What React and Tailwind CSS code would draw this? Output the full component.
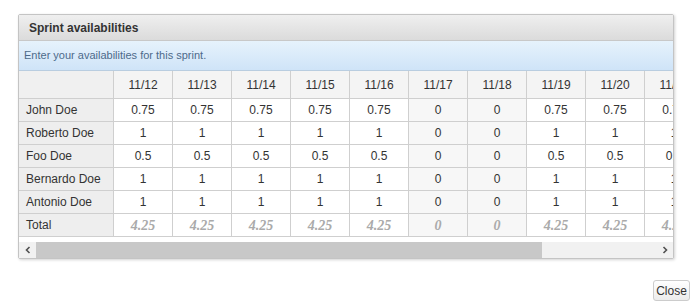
import React from "react";

const dates = ["11/12","11/13","11/14","11/15","11/16","11/17","11/18","11/19","11/20","11/21"];
const weekend = new Set(["11/17","11/18"]);
const rows = [
  ["John Doe", "0.75"],
  ["Roberto Doe", "1"],
  ["Foo Doe", "0.5"],
  ["Bernardo Doe", "1"],
  ["Antonio Doe", "1"],
];

function Cell({ d, children, extra = "" }) {
  const bg = weekend.has(d) ? "bg-[#f7f7f7]" : "bg-white";
  return (
    <div className={`w-[59px] shrink-0 border-r border-[#cfcfcf] flex items-center justify-center ${bg} ${extra}`}>
      {children}
    </div>
  );
}

export default function App() {
  return (
    <div className="w-[693px] h-[303px] bg-white relative text-[12px] text-[#333]" style={{ fontFamily: '"Liberation Sans", Arial, sans-serif' }}>
      <div className="absolute left-[18px] top-[14px] w-[656px] border border-[#c4c4c4] rounded-[2px] shadow-[1px_1px_3px_rgba(0,0,0,0.18)] bg-white overflow-hidden">
        <div className="h-[26px] bg-gradient-to-b from-[#efefef] to-[#dbdbdb] border-b border-[#c8c8c8] flex items-center pl-[10px] font-bold text-[12px] text-[#333]">
          Sprint availabilities
        </div>
        <div className="h-[30px] bg-gradient-to-b from-[#e6f2fc] to-[#cfe4f8] border-b border-[#b9cde0] flex items-center pl-[5px] text-[11px] text-[#4d6a8a]">
          Enter your availabilities for this sprint.
        </div>
        <div className="overflow-hidden">
          <div className="flex flex-col w-max">
            <div className="flex h-[28px] border-b border-[#cfcfcf] bg-[#f2f2f2]">
              <div className="w-[95px] shrink-0 border-r border-[#cfcfcf] bg-[#f0f0f0]" />
              {dates.map((d) => (
                <div key={d} className="w-[59px] shrink-0 border-r border-[#cfcfcf] flex items-center justify-center bg-[#f4f4f4] text-[12px]">
                  {d}
                </div>
              ))}
            </div>
            {rows.map(([name, v]) => (
              <div key={name} className="flex h-[23px] border-b border-[#cfcfcf]">
                <div className="w-[95px] shrink-0 border-r border-[#cfcfcf] bg-[#eeeeee] flex items-center pl-[7px]">
                  {name}
                </div>
                {dates.map((d) => (
                  <Cell key={d} d={d}>{weekend.has(d) ? "0" : v}</Cell>
                ))}
              </div>
            ))}
            <div className="flex h-[23px] border-b border-[#cfcfcf]">
              <div className="w-[95px] shrink-0 border-r border-[#cfcfcf] bg-[#eeeeee] flex items-center pl-[7px]">
                Total
              </div>
              {dates.map((d) => (
                <Cell key={d} d={d} extra="italic font-bold text-[#aaaaaa] text-[14px]">
                  <span style={{ fontFamily: '"Liberation Serif", "Times New Roman", serif' }}>
                    {weekend.has(d) ? "0" : "4.25"}
                  </span>
                </Cell>
              ))}
            </div>
          </div>
        </div>
        <div className="h-[21px] pt-[5px] bg-white">
          <div className="h-[16px] flex bg-[#f1f1f1]">
            <div className="w-[17px] flex items-center justify-center text-[#555]">
              <svg width="8" height="8" viewBox="0 0 8 8"><path d="M5.5 1 L2.5 4 L5.5 7" fill="none" stroke="#505050" strokeWidth="1.6" /></svg>
            </div>
            <div className="w-[506px] bg-[#c8c8c8]" />
            <div className="flex-1" />
            <div className="w-[17px] flex items-center justify-center">
              <svg width="8" height="8" viewBox="0 0 8 8"><path d="M2.5 1 L5.5 4 L2.5 7" fill="none" stroke="#505050" strokeWidth="1.6" /></svg>
            </div>
          </div>
        </div>
      </div>
      <button className="absolute left-[653px] top-[280px] w-[37px] h-[21px] border border-[#cccccc] rounded-[3px] bg-gradient-to-b from-[#ffffff] to-[#ececec] text-[12px] text-[#333] flex items-center justify-center">
        Close
      </button>
    </div>
  );
}
